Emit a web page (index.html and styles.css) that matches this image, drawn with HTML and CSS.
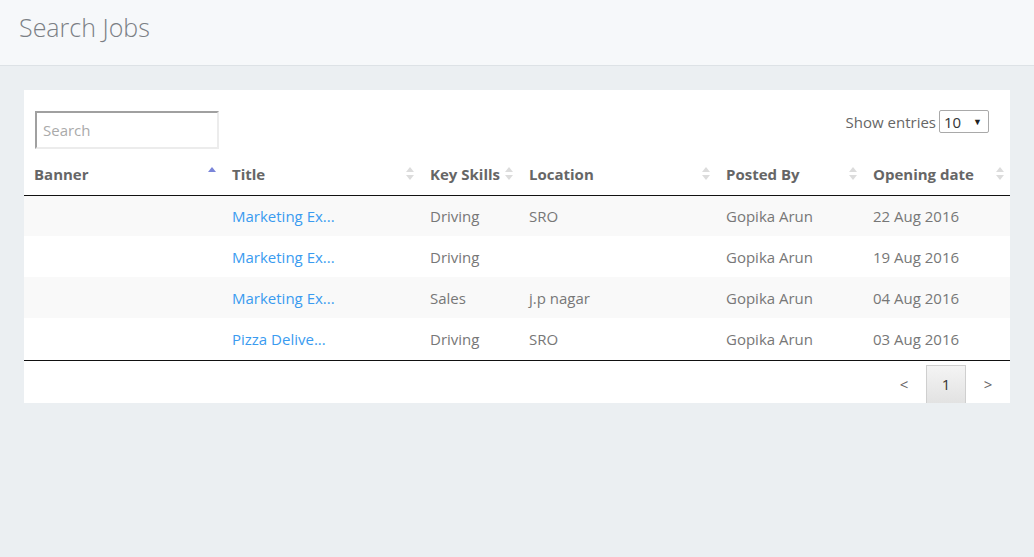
FILE: index.html
```html
<!DOCTYPE html>
<html>
<head>
<meta charset="utf-8">
<link rel="stylesheet" href="styles.css">
</head>
<body>
<header class="page-header">
  <h1 class="page-title">Search Jobs</h1>
</header>
<main class="content">
  <section class="card">
    <div class="toolbar">
      <input class="search" type="text" placeholder="Search">
      <label class="entries">Show entries
        <span class="select"><span class="select-value">10</span><span class="select-arrow">&#9660;</span></span>
      </label>
    </div>
    <table class="jobs">
      <colgroup>
        <col class="c-banner"><col class="c-title"><col class="c-skills"><col class="c-loc"><col class="c-posted"><col class="c-date">
      </colgroup>
      <thead>
        <tr>
          <th><span>Banner</span><i class="sort asc"></i></th>
          <th><span>Title</span><i class="sort"></i></th>
          <th><span>Key Skills</span><i class="sort"></i></th>
          <th><span>Location</span><i class="sort"></i></th>
          <th><span>Posted By</span><i class="sort"></i></th>
          <th><span>Opening date</span><i class="sort"></i></th>
        </tr>
      </thead>
      <tbody>
        <tr><td></td><td><a href="#">Marketing Ex...</a></td><td>Driving</td><td>SRO</td><td>Gopika Arun</td><td>22 Aug 2016</td></tr>
        <tr><td></td><td><a href="#">Marketing Ex...</a></td><td>Driving</td><td></td><td>Gopika Arun</td><td>19 Aug 2016</td></tr>
        <tr><td></td><td><a href="#">Marketing Ex...</a></td><td>Sales</td><td>j.p nagar</td><td>Gopika Arun</td><td>04 Aug 2016</td></tr>
        <tr><td></td><td><a href="#">Pizza Delive...</a></td><td>Driving</td><td>SRO</td><td>Gopika Arun</td><td>03 Aug 2016</td></tr>
      </tbody>
    </table>
    <nav class="pager">
      <span class="pg-arrow">&lt;</span>
      <span class="pg-current">1</span>
      <span class="pg-arrow">&gt;</span>
    </nav>
  </section>
</main>
</body>
</html>
```
FILE: styles.css
```css
* { box-sizing: border-box; }
html, body { margin: 0; padding: 0; }
body {
  background: #ebeff2;
  font-family: "Open Sans", "Liberation Sans", sans-serif;
  color: #777;
  height: 557px;
}
.page-header {
  background: #f6f8fa;
  border-bottom: 1px solid #dde2e6;
  height: 66px;
  padding: 0 19px;
  display: flex;
  align-items: center;
}
.page-title {
  margin: 0;
  font-weight: 300;
  font-size: 25px;
  color: #7b7f85;
  line-height: 1;
  padding-bottom: 10px;
}
.content {
  padding: 24px 24px 0 24px;
}
.card {
  background: #fff;
  width: 986px;
}
.toolbar {
  display: flex;
  justify-content: space-between;
  align-items: flex-start;
  padding: 21px 21px 0 11px;
  height: 64px;
}
.search {
  width: 184px;
  height: 38px;
  border: 2px solid #ececec;
  border-top-color: #a0a0a0;
  border-left-color: #a0a0a0;
  padding: 0 6px;
  font-family: inherit;
  font-size: 15px;
  color: #777;
  outline: none;
}
.search::placeholder { color: #aaa; }
.entries {
  display: flex;
  align-items: center;
  gap: 3px;
  font-size: 15px;
  color: #666;
  margin-top: -1px;
}
.select {
  display: inline-flex;
  align-items: center;
  justify-content: space-between;
  width: 50px;
  height: 23px;
  border: 1px solid #a9a9a9;
  border-radius: 2px;
  padding: 0 6px 0 4px;
  color: #333;
  font-size: 15px;
}
.select-arrow { font-size: 9px; color: #222; }
.jobs {
  width: 986px;
  border-collapse: collapse;
  table-layout: fixed;
  font-size: 15px;
}
.c-banner { width: 198px; }
.c-title { width: 198px; }
.c-skills { width: 99px; }
.c-loc { width: 197px; }
.c-posted { width: 147px; }
.c-date { width: 147px; }
.jobs th {
  text-align: left;
  font-weight: 700;
  color: #666;
  height: 41px;
  padding: 0 10px;
  border-bottom: 1px solid #111;
  position: relative;
  white-space: nowrap;
  vertical-align: middle;
}
.jobs td {
  height: 41px;
  padding: 0 10px;
  white-space: nowrap;
  overflow: hidden;
  vertical-align: middle;
  color: #777;
}
.jobs tbody tr:nth-child(odd) { background: #f9f9f9; }
.jobs tbody tr:last-child td { border-bottom: 1px solid #111; height: 42px; padding-top: 1px; }
.jobs a { color: #3a9bf0; text-decoration: none; }
.sort {
  position: absolute;
  right: 6px;
  top: 50%;
  width: 8px;
  height: 13px;
  margin-top: -7px;
}
.sort::before, .sort::after {
  content: "";
  position: absolute;
  left: 0;
  border-left: 4px solid transparent;
  border-right: 4px solid transparent;
}
.sort::before { top: 0; border-bottom: 5px solid #dcdcdc; }
.sort::after { bottom: 0; border-top: 5px solid #dcdcdc; }
.sort.asc::before { border-bottom-color: #7a85d9; }
.sort.asc::after { display: none; }
.pager {
  display: flex;
  justify-content: flex-end;
  align-items: flex-start;
  height: 42px;
  padding: 4px 0 0 0;
  font-size: 15px;
}
.pg-arrow {
  width: 44px;
  height: 38px;
  display: flex;
  align-items: center;
  justify-content: center;
  color: #666;
}
.pg-current {
  width: 40px;
  height: 38px;
  display: flex;
  align-items: center;
  justify-content: center;
  border: 1px solid #cfcfcf;
  border-bottom: 0;
  background: linear-gradient(#f4f4f4, #e2e2e2);
  color: #333;
}
```
